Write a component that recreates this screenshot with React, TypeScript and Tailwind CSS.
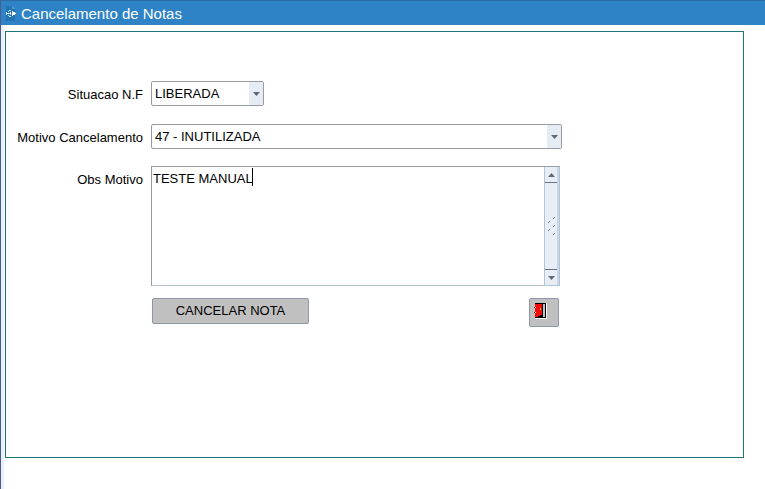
import { useState } from "react";
import type { ReactNode } from "react";

function AppIcon() {
  return (
    <svg width="12" height="16" viewBox="0 0 12 16" shapeRendering="crispEdges" aria-hidden="true">
      <path d="M1 0h6l3 3v12H1z" fill="#2273b4" />
      <path d="M7 0v3h3z" fill="#4b9ad6" />
      <path d="M2 7h2v1H2zM3 5h1v1H3zM3 9h1v1H3zM4 4h2v1H4zM4 10h2v1H4zM4 7h1v1H4zM5 6h1v3H5zM1 6h1v3H1z" fill="#d6ecfb" />
      <path d="M7 5h1v5H7zM8 6h1v3H8zM9 6h1v3H9zM10 7h1v1h-1z" fill="#ffffff" />
    </svg>
  );
}

function DoorIcon() {
  return (
    <svg width="14" height="16" viewBox="0 0 14 16" shapeRendering="crispEdges" aria-hidden="true">
      <path d="M1 0h12v16H1z" fill="#ffffff" />
      <path d="M1 0h11v15H1z" fill="#000000" />
      <path d="M9 1h2v13H9z" fill="#c4c4c4" />
      <path d="M1 1h7v11H6v1H4v1H1z" fill="#f40c0c" />
      <path d="M8 1h1v11H8zM6 12h2v1H6zM4 13h2v1H4zM0 4h1v1H0zM0 9h1v1H0z" fill="#000000" />
      <path d="M1 4h1v1H1zM1 9h1v1H1zM6 5h1v2H6z" fill="#ffe14a" />
    </svg>
  );
}

function Triangle({ up = false }: { up?: boolean }) {
  return (
    <svg width="7" height="4" viewBox="0 0 7 4" aria-hidden="true">
      <path d={up ? "M0 4h7L3.5 0z" : "M0 0h7L3.5 4z"} fill="#626873" />
    </svg>
  );
}

function Grip() {
  return (
    <svg width="9" height="20" viewBox="0 0 9 20" stroke="#8a93a3" strokeWidth="1" aria-hidden="true">
      <path d="M6 3l2-2M6 11l2-2M6 19l2-2M1 7l2-2M1 15l2-2" />
    </svg>
  );
}

function Select({ id, width, options }: { id: string; width: string; options: string[] }) {
  return (
    <div className={`relative h-[25px] ${width}`}>
      <select
        id={id}
        className="h-full w-full appearance-none rounded-xs border border-[#989ba6] bg-white pr-4 pl-[3px] text-[13px] text-black outline-none"
      >
        {options.map((option) => (
          <option key={option}>{option}</option>
        ))}
      </select>
      <span className="pointer-events-none absolute inset-y-px right-px flex w-3.5 items-center justify-center bg-[#e6ecf4]">
        <Triangle />
      </span>
    </div>
  );
}

function Label({ htmlFor, children }: { htmlFor: string; children: ReactNode }) {
  return (
    <label htmlFor={htmlFor} className="pt-1.5 text-right text-[13px] leading-4 whitespace-nowrap">
      {children}
    </label>
  );
}

export default function App() {
  const [note, setNote] = useState("TESTE MANUAL");

  return (
    <div className="flex min-h-screen flex-col border-l border-[#4c5b88] bg-white font-['Liberation_Sans',Arial,sans-serif] text-black">
      <header className="flex h-[25px] items-center gap-1 border-t border-[#2a6ca6] bg-[#2d83c5] pt-0.5 pl-1 text-white">
        <AppIcon />
        <h1 className="text-[15px] leading-5">Cancelamento de Notas</h1>
      </header>

      <div className="flex flex-1 border-l-3 border-[#e9effb] pt-1.5 pr-[21px] pb-[31px] pl-px">
        <main className="flex-1 border border-[#1f7478] pt-[49px] pl-2">
          <form className="grid grid-cols-[129px_411px] gap-x-2" onSubmit={(e) => e.preventDefault()}>
            <Label htmlFor="situacao">Situacao N.F</Label>
            <div className="pb-[18px]">
              <Select id="situacao" width="w-[113px]" options={["LIBERADA", "CANCELADA"]} />
            </div>

            <Label htmlFor="motivo">Motivo Cancelamento</Label>
            <div className="pb-[17px]">
              <Select id="motivo" width="w-full" options={["47 - INUTILIZADA"]} />
            </div>

            <Label htmlFor="obs">Obs Motivo</Label>
            <div className="relative mr-0.5 flex h-[120px] border border-t-[#989ba6] border-r-[#b4c4d6] border-b-[#b4c4d6] border-l-[#989ba6]">
              <textarea
                id="obs"
                value={note}
                onChange={(e) => setNote(e.target.value)}
                className="min-w-0 flex-1 resize-none overflow-hidden px-px py-1 text-[13px] leading-4 outline-none"
              />
              <span className="pointer-events-none absolute top-px left-[100px] h-[18px] w-px bg-black" />
              <div className="flex w-[15px] flex-col items-center border-r-2 border-l border-r-[#c9d6e4] border-l-[#b4c4d6] bg-[#e8eef6]">
                <span className="flex h-4 w-full items-center justify-center border-b border-[#6d7480]">
                  <Triangle up />
                </span>
                <span className="flex flex-1 items-center">
                  <Grip />
                </span>
                <span className="flex h-4 w-full items-center justify-center border-t border-[#6d7480]">
                  <Triangle />
                </span>
              </div>
            </div>

            <div className="col-start-2 flex items-start justify-between pt-3 pr-[3px] pl-px">
              <button
                type="submit"
                className="h-[26px] w-[157px] rounded-xs border border-[#8e98a6] bg-[#c0c0c0] text-[13px]"
              >
                CANCELAR NOTA
              </button>
              <button
                type="button"
                aria-label="Sair"
                className="flex h-[29px] w-[30px] justify-center rounded-xs border border-[#8e98a6] bg-[#c0c0c0] pt-1 pr-1.5"
              >
                <DoorIcon />
              </button>
            </div>
          </form>
        </main>
      </div>
    </div>
  );
}
